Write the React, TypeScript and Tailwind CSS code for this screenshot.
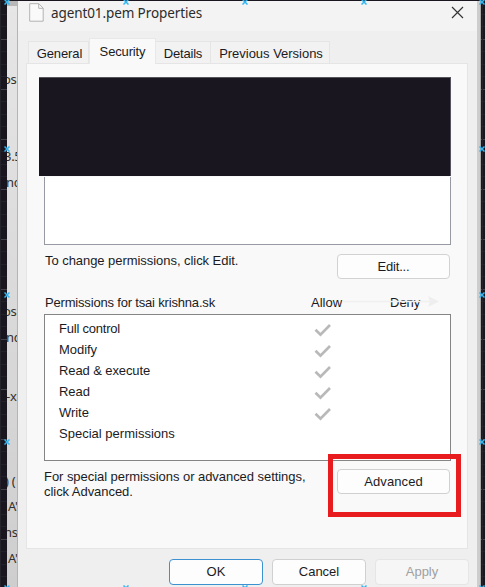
import React from "react";

const permissions = [
  { name: "Full control", allow: true, spacing: "tracking-[-0.22px]" },
  { name: "Modify", allow: true, spacing: "tracking-[-0.05px]" },
  { name: "Read & execute", allow: true, spacing: "tracking-[-0.1px]" },
  { name: "Read", allow: true, spacing: "tracking-[-0.05px]" },
  { name: "Write", allow: true, spacing: "tracking-[-0.05px]" },
  { name: "Special permissions", allow: false, spacing: "tracking-[0.01px]" },
];

const fragments = [
  { text: "osi", top: 71, left: -4 },
  { text: "3.5", top: 148, left: -3 },
  { text: "nc", top: 174, left: -1 },
  { text: "osi", top: 303, left: -4 },
  { text: "nc", top: 329, left: -1 },
  { text: "-x", top: 388, left: -1 },
  { text: ") (", top: 473, left: -2 },
  { text: "A'", top: 498, left: 1 },
  { text: "ns", top: 524, left: -3 },
  { text: "A'", top: 550, left: 1 },
];

const handles = [
  [7, 2], [126, 2], [245, 2], [364, 2], [482, 2],
  [7, 149], [7, 295], [7, 442], [482, 149], [482, 295], [482, 442],
  [7, 588], [126, 588], [245, 588], [364, 588], [482, 588],
];

function Grid({ offset }: { offset: number }) {
  const lines = [];
  for (let i = 0; i < 48; i++) {
    const y = 1 + i * 12.5;
    lines.push(
      <path key={i} d={`M0 ${Math.round(y) - 0.5}h8`} stroke={i % 4 === 3 ? "#43414a" : "#222028"} strokeWidth="1" />
    );
  }
  return (
    <svg className="h-[587px] w-[8px]" viewBox="0 0 8 587">
      <g>{lines}</g>
      <path d={`M${offset} 0v587`} stroke="#24222a" strokeWidth="1" />
    </svg>
  );
}

function Tick() {
  return (
    <svg className="h-[14px] w-[18px]" viewBox="0 0 18 14" fill="none">
      <path d="M1.5 6.7l5 5L16 2" stroke="#b9b9b9" strokeWidth="2.7" />
    </svg>
  );
}

function Button({ children, className }: { children: React.ReactNode; className: string }) {
  return (
    <button className={`flex shrink-0 items-center justify-center rounded-[4px] border ${className}`}>
      {children}
    </button>
  );
}

export default function App() {
  return (
    <div className="relative flex h-[587px] w-[485px] overflow-hidden bg-[#19161f] pt-px font-['Liberation_Sans',Arial,sans-serif] text-[13px] leading-[15px] text-[#1b1b1f]">
      <div className="w-[7px] shrink-0 overflow-hidden"><Grid offset={0.5} /></div>
      <div className="relative w-[11px] shrink-0 overflow-hidden border-r border-[#b4b4b4] bg-gradient-to-b from-[#e6e6e6] to-[#cecece]">
        <div className="h-[5px] bg-[#b8b8b8]" />
        {fragments.map((f) => (
          <span key={f.top} style={{ top: f.top - 1, left: f.left }} className="absolute whitespace-pre font-['Noto_Sans',sans-serif] text-[13px] leading-[16px] tracking-[-0.3px] text-[#35302e]">
            {f.text}
          </span>
        ))}
      </div>

      <main className="flex w-[459px] shrink-0 flex-col bg-[#efefef]">
        <header className="flex h-[30px] shrink-0 items-start bg-[#f3f3f3]">
          <svg className="ml-[11px] mt-[2px] h-[19px] w-[15px]" viewBox="0 0 15 19" fill="none">
            <path d="M.7.7h9.1l4.4 4.5v13H.7z" fill="#fafafa" stroke="#b3b3b3" />
            <path d="M9.7.8v4.5h4.4" stroke="#b3b3b3" />
          </svg>
          <h1 className="ml-[7px] mt-[3px] whitespace-nowrap font-['Noto_Sans',sans-serif] text-[13.5px] leading-[18px] tracking-[-0.1px] text-[#2b2b2b]">agent01.pem Properties</h1>
          <svg className="ml-auto mr-[13px] mt-[5px] h-[13px] w-[13px]" viewBox="0 0 13 13">
            <path d="M1 1l11 11M12 1L1 12" stroke="#353535" strokeWidth="1.2" />
          </svg>
        </header>

        <nav className="ml-[10px] mt-[7px] flex h-[25px] shrink-0 items-end whitespace-nowrap">
          <div className="flex h-[22px] w-[61px] items-center justify-center border border-b-0 border-[#e5e5e5] bg-[#f2f2f2] pl-[2px] pt-[2px] tracking-[-0.1px]">General</div>
          <div className="relative -mb-px flex h-[26px] w-[67px] items-center justify-center border border-b-0 border-[#e8e8e8] bg-[#f9f9f9] pb-px tracking-[-0.15px]">Security</div>
          <div className="flex h-[22px] w-[54px] items-center justify-center border-t border-[#e5e5e5] bg-[#f2f2f2] pt-[2px] tracking-[-0.2px]">Details</div>
          <div className="flex h-[22px] w-[120px] items-center justify-center border border-b-0 border-[#e5e5e5] bg-[#f2f2f2] pl-[2px] pt-[2px] tracking-[-0.02px]">Previous Versions</div>
        </nav>

        <section className="ml-[8px] flex h-[486px] w-[442px] shrink-0 flex-col border border-[#e5e5e5] bg-[#f9f9f9]">
          <div className="ml-[12px] mt-[13px] h-[99px] w-[412px] shrink-0 border-r border-t border-[#55535c] bg-[#19161f]" />
          <div className="ml-[17px] mt-px h-[68px] w-[407px] shrink-0 border border-t-0 border-[#989aa3] bg-white" />
          <div className="ml-[18px] mt-[9px] flex h-[25px] w-[405px] shrink-0 justify-between">
            <span className="-mt-px whitespace-nowrap tracking-[-0.05px]">To change permissions, click Edit.</span>
            <Button className="w-[113px] border-[#d2d2d2] bg-[#fdfdfd] tracking-[-0.2px]">Edit...</Button>
          </div>
          <div className="relative ml-[18px] mt-[16px] flex h-[18px] w-[405px] shrink-0">
            <span className="w-[266px] whitespace-nowrap tracking-[-0.18px]">Permissions for tsai krishna.sk</span>
            <span className="w-[79px]">Allow</span>
            <span>Deny</span>
            <svg className="absolute left-[297px] top-[1px] h-[12px] w-[97px]" viewBox="0 0 97 12">
              <path d="M0 5.5h90" stroke="#f0f0f0" strokeWidth="1.5" />
              <path d="M86 0l11 5.5L86 11l2-5.5z" fill="#eeeeee" />
            </svg>
          </div>
          <div className="ml-[17px] mt-px h-[147px] w-[407px] shrink-0 border border-[#858585] bg-white pt-[3px]">
            {permissions.map((p) => (
              <div key={p.name} className="flex h-[21px] items-center pl-[14px]">
                <span className={`w-[255px] whitespace-nowrap ${p.spacing}`}>{p.name}</span>
                {p.allow && <div className="pt-[3px]"><Tick /></div>}
              </div>
            ))}
          </div>
          <div className="ml-[17px] mt-[8px] flex w-[406px] shrink-0 justify-between">
            <p className="whitespace-nowrap tracking-[-0.05px]">For special permissions or advanced settings,<br />click Advanced.</p>
            <Button className="h-[25px] w-[113px] border-[#d0d0d0] bg-[#fdfdfd] tracking-[0.1px]">Advanced</Button>
          </div>
        </section>

        <footer className="ml-[151px] mt-[10px] flex shrink-0 gap-[9px]">
          <Button className="h-[26px] w-[94px] border-[#3c91d0] bg-[#fdfdfd] pb-px">OK</Button>
          <Button className="h-[26px] w-[94px] border-[#d0d0d0] bg-[#fdfdfd] pb-px">Cancel</Button>
          <Button className="h-[26px] w-[94px] border-[#e5e5e5] bg-[#f6f6f6] pb-px text-[#a0a0a0]">Apply</Button>
        </footer>
      </main>

      <div className="w-[4px] shrink-0 border-r border-[#a8a8a8] bg-[#cdcdcd]" />
      <div className="w-[4px] shrink-0 overflow-hidden"><Grid offset={1.5} /></div>

      <div className="absolute left-[328px] top-[454px] h-[63px] w-[133px] border-[5px] border-[#e81b1e]" />
      {handles.map(([x, y]) => (
        <svg key={`${x}-${y}`} style={{ left: x - 3, top: y - 3 }} className="absolute h-[6px] w-[6px]" viewBox="0 0 6 6">
          <path d="M.5.5l5 5M5.5.5l-5 5" stroke="#31b6f2" strokeWidth="1.5" />
        </svg>
      ))}
    </div>
  );
}
